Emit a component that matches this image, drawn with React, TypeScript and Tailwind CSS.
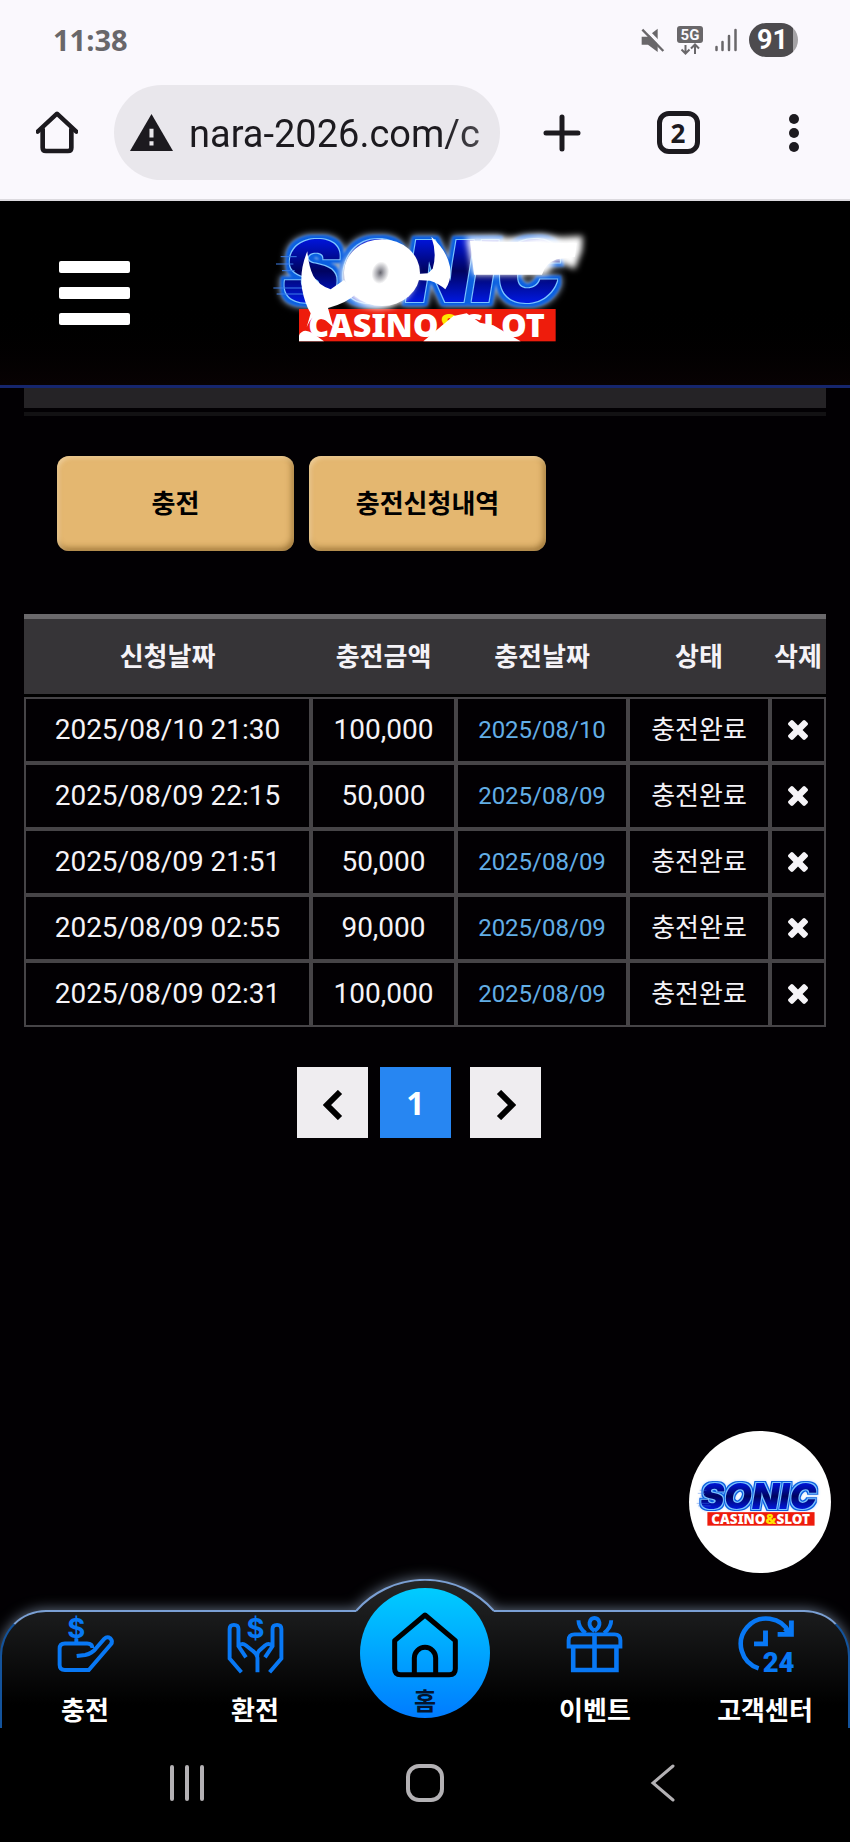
import { ReactNode } from 'react';

type Charge = {
  requestedAt: string;
  amount: string;
  chargedAt: string;
  status: string;
};

const charges: Charge[] = [
  { requestedAt: '2025/08/10 21:30', amount: '100,000', chargedAt: '2025/08/10', status: '충전완료' },
  { requestedAt: '2025/08/09 22:15', amount: '50,000', chargedAt: '2025/08/09', status: '충전완료' },
  { requestedAt: '2025/08/09 21:51', amount: '50,000', chargedAt: '2025/08/09', status: '충전완료' },
  { requestedAt: '2025/08/09 02:55', amount: '90,000', chargedAt: '2025/08/09', status: '충전완료' },
  { requestedAt: '2025/08/09 02:31', amount: '100,000', chargedAt: '2025/08/09', status: '충전완료' },
];

const columns = [
  { label: '신청날짜', width: 'w-[287px]' },
  { label: '충전금액', width: 'w-[145px]' },
  { label: '충전날짜', width: 'w-[172px]' },
  { label: '상태', width: 'w-[142px]' },
  { label: '삭제', width: 'w-[56px]' },
];

function StatusBar() {
  return (
    <div className="flex h-20 items-center justify-between pl-[53px] pr-[52px] text-[#69676a]">
      <span className="font-['Open_Sans',sans-serif] text-[29px] font-bold">11:38</span>
      <div className="flex items-center gap-3">
        <svg viewBox="0 0 75 75" className="h-[25px] w-[25px]">
          <path d="M5 26H22L53 2V72L24 50H5Z" fill="currentColor" />
          <path d="M14 0L78 66" stroke="#faf8fd" strokeWidth="10" />
          <path d="M7 5L70 69" stroke="currentColor" strokeWidth="7" />
        </svg>
        <svg viewBox="0 0 26 29" className="h-[29px] w-[26px]">
          <rect width="26" height="17" rx="3" fill="currentColor" />
          <text
            x="13"
            y="14"
            textAnchor="middle"
            fill="#faf8fd"
            className="font-['Roboto',sans-serif] text-[15px] font-bold"
          >
            5G
          </text>
          <path
            d="M8.500 19V27M4.500 23.500L8.500 27.500L12.500 23.500M18 28V19M14 22.500L18 18.500L22 22.500"
            fill="none"
            stroke="currentColor"
            strokeWidth="2"
          />
        </svg>
        <svg viewBox="0 0 22 24" className="h-6 w-[22px]">
          <path
            d="M1.500 19V22M7.500 14V22M14 8V22M20.500 2V22"
            stroke="currentColor"
            strokeWidth="2.500"
            strokeLinecap="round"
          />
        </svg>
        <span className="flex h-[34px] w-[49px] items-center justify-center rounded-full bg-linear-to-r from-[#4d4b4e] from-90% to-[#a5a3a6] to-90% pr-0.5 font-['Roboto',sans-serif] text-[27px] font-bold text-white">
          91
        </span>
      </div>
    </div>
  );
}

function BrowserBar() {
  return (
    <div className="flex h-[105px] items-center pl-9 pr-8 text-[#1c1a1f]">
      <button aria-label="홈페이지">
        <svg viewBox="0 0 126 129" className="h-[43px] w-[42px]" fill="none" stroke="currentColor">
          <path d="M5 62L63 8L121 62" strokeWidth="13" strokeLinecap="round" strokeLinejoin="round" />
          <path d="M20 52V110Q20 120 30 120H96Q106 120 106 110V52" strokeWidth="14" />
        </svg>
      </button>
      <div className="ml-9 flex h-[95px] min-w-0 flex-1 items-center rounded-full bg-[#e9e7ec] pl-4 pr-[14px]">
        <svg viewBox="0 0 128 110" className="h-[37px] w-[43px] shrink-0">
          <path d="M64 0L128 110H0Z" fill="currentColor" />
          <path d="M64 44V70M64 81V94" stroke="#e9e7ec" strokeWidth="12" />
        </svg>
        <input
          aria-label="주소"
          readOnly
          value="nara-2026.com/c"
          className="ml-4 min-w-0 flex-1 bg-transparent pt-1 font-['Roboto',sans-serif] text-[38px] outline-none [mask-image:linear-gradient(to_right,black_85%,#000b_100%)]"
        />
      </div>
      <div className="ml-[38px] flex gap-[68px]">
        <button aria-label="새 탭" className="flex h-12 w-12 items-center justify-center">
          <svg viewBox="0 0 38 38" className="h-[38px] w-[38px]">
            <path d="M19 3V35M3 19H35" stroke="currentColor" strokeWidth="5" strokeLinecap="round" />
          </svg>
        </button>
        <button aria-label="탭 2개" className="flex h-12 w-12 items-center justify-center">
          <span className="flex h-[43px] w-[43px] items-center justify-center rounded-xl border-[5px] border-current font-['Open_Sans',sans-serif] text-[26px] font-bold leading-none">
            2
          </span>
        </button>
        <button aria-label="메뉴" className="flex h-12 w-12 items-center justify-center">
          <svg viewBox="0 0 10 40" className="h-10 w-[10px]" fill="currentColor">
            <circle cx="5" cy="6" r="5" />
            <circle cx="5" cy="20" r="5" />
            <circle cx="5" cy="34" r="5" />
          </svg>
        </button>
      </div>
    </div>
  );
}

// `flash` lays the white shapes of the animated banner over the wordmark
function Logo({ id, flash = false, className }: { id: string; flash?: boolean; className: string }) {
  return (
    <svg viewBox="-15 0 1020 390" className={className} role="img" aria-label="SONIC CASINO&SLOT">
      <defs>
        <linearGradient id={`${id}-blue`} x1="0" y1="0" x2="0" y2="1">
          <stop offset="0.2" stopColor="#0014d8" />
          <stop offset="0.5" stopColor="#000360" />
          <stop offset="0.8" stopColor="#0018e0" />
        </linearGradient>
        <radialGradient id={`${id}-hole`}>
          <stop offset="0" stopColor="#66666e" />
          <stop offset="0.4" stopColor="#a8a8ae" />
          <stop offset="1" stopColor="#ffffff" />
        </radialGradient>
        {/* light edge, blue outline and outer glow around the letters */}
        <filter id={`${id}-outline`} x="-20%" y="-30%" width="140%" height="160%" colorInterpolationFilters="sRGB">
          <feMorphology in="SourceAlpha" operator="dilate" radius="4" result="thin" />
          <feFlood floodColor="#7cc4ff" />
          <feComposite in2="thin" operator="in" result="edge" />
          <feMorphology in="SourceAlpha" operator="dilate" radius="12" result="thick" />
          <feGaussianBlur in="thick" stdDeviation="3" result="thickSoft" />
          <feFlood floodColor="#0a5fe0" />
          <feComposite in2="thickSoft" operator="in" result="outline" />
          <feGaussianBlur in="thick" stdDeviation="11" result="wide" />
          <feFlood floodColor="#c4dcff" />
          <feComposite in2="wide" operator="in" result="glow" />
          <feMerge>
            <feMergeNode in="glow" />
            <feMergeNode in="outline" />
            <feMergeNode in="edge" />
            <feMergeNode in="SourceGraphic" />
          </feMerge>
        </filter>
        <filter id={`${id}-soft`} x="-20%" y="-30%" width="140%" height="160%">
          <feGaussianBlur stdDeviation="9" />
        </filter>
      </defs>
      <text
        x="68"
        y="246"
        fill={`url(#${id}-blue)`}
        filter={`url(#${id}-outline)`}
        className="font-['Inter',sans-serif] text-[256px] font-black italic"
      >
        SONIC
      </text>
      <path d="M62 110H110M48 132H100M66 152H104M40 204H130M50 222H140" stroke="#3c7fe8" strokeWidth="3" />
      <rect x="117" y="267" width="770" height="97" fill="#ee1c0c" />
      <text
        x="500"
        y="350"
        textAnchor="middle"
        fill="#ffffff"
        className="font-['Noto_Sans',sans-serif] text-[97px] font-black"
      >
        CASINO<tspan fill="#ffe600">&amp;</tspan>SLOT
      </text>
      {flash && (
        <g fill="#ffffff">
          <path
            d="M618 52L700 50L770 54L840 46L900 52L968 48L966 90L944 148L890 120L860 164H640Z"
            filter={`url(#${id}-soft)`}
          />
          <path d="M630 62L700 66L820 66L880 70L950 70L945 110L890 118Q856 130 846 164H642Z" />
          <ellipse cx="355" cy="168" rx="112" ry="98" filter={`url(#${id}-soft)`} />
          <ellipse cx="366" cy="158" rx="114" ry="100" />
          <ellipse cx="361" cy="158" rx="26" ry="34" fill={`url(#${id}-hole)`} transform="rotate(14 361 158)" />
          <path d="M142 94Q118 150 126 206Q134 250 152 280L140 322Q152 288 178 284L220 322L204 264Q260 250 290 220L252 180L212 208Q176 196 160 168Q146 140 142 94Z" />
          <path d="M514 50Q532 100 518 146L504 160L470 162V180L510 182Q536 190 556 208Q576 180 570 140Q560 90 514 50Z" />
          <path d="M117 364V346Q130 322 158 340L192 364Z" />
          <path d="M490 364L580 288L620 280L660 308L700 316L782 364Z" />
        </g>
      )}
    </svg>
  );
}

function SiteHeader() {
  return (
    <header className="grid h-[187px] grid-cols-[1fr_auto_1fr] items-center border-b-[3px] border-[#16266e] bg-linear-to-b from-black from-50% to-[#080203] pl-[59px] pr-[59px]">
      <button aria-label="전체메뉴" className="flex w-[71px] flex-col gap-[14px]">
        <span className="h-3 rounded-xs bg-white" />
        <span className="h-3 rounded-xs bg-white" />
        <span className="h-3 rounded-xs bg-white" />
      </button>
      <a href="#home" className="mb-4 block">
        <Logo id="top" flash className="h-[130px] w-[340px]" />
      </a>
    </header>
  );
}

function ChargeTable() {
  return (
    <table className="mt-[63px] w-full table-fixed border-separate border-spacing-0 text-center text-[26px] text-[#f5f3f7]">
      <thead>
        <tr>
          {columns.map((col) => (
            <th
              key={col.label}
              className={`${col.width} h-[83px] whitespace-nowrap border-b-[3px] border-t-[5px] border-b-black border-t-[#6b696c] bg-[#363437] p-0 pt-0.5 font-bold`}
            >
              {col.label}
            </th>
          ))}
        </tr>
      </thead>
      <tbody>
        {charges.map((row) => (
          <tr key={row.requestedAt} className="[&>td]:h-[66px] [&>td]:border-2 [&>td]:border-[#464447] [&>td]:p-0">
            <td className="text-[28px]">{row.requestedAt}</td>
            <td className="text-[28px]">{row.amount}</td>
            <td className="text-2xl text-[#62aee6]">{row.chargedAt}</td>
            <td>{row.status}</td>
            <td>
              <button aria-label={`${row.requestedAt} 삭제`} className="block w-full">
                <svg viewBox="110 366 1188 1188" className="mx-auto h-5 w-5" fill="currentColor">
                  <path d="M1298 1322q0 40-28 68l-136 136q-28 28-68 28t-68-28l-294-294-294 294q-28 28-68 28t-68-28l-136-136q-28-28-28-68t28-68l294-294-294-294q-28-28-28-68t28-68l136-136q28-28 68-28t68 28l294 294 294-294q28-28 68-28t68 28l136 136q28 28 28 68t-28 68l-294 294 294 294q28 28 28 68z" />
                </svg>
              </button>
            </td>
          </tr>
        ))}
      </tbody>
    </table>
  );
}

function Pagination() {
  return (
    <nav aria-label="페이지" className="mt-10 flex justify-center pr-3 text-black">
      <button aria-label="이전" className="flex h-[71px] w-[71px] items-center justify-center bg-[#efedf0]">
        <svg viewBox="0 0 20 30" className="mt-1 h-[30px] w-5" fill="none" stroke="currentColor" strokeWidth="6">
          <path d="M17 2L4 15L17 28" />
        </svg>
      </button>
      <button
        aria-current="page"
        className="ml-3 h-[71px] w-[71px] bg-[#2786f2] font-['Open_Sans',sans-serif] text-[32px] font-bold text-white"
      >
        1
      </button>
      <button aria-label="다음" className="ml-[19px] flex h-[71px] w-[71px] items-center justify-center bg-[#efedf0]">
        <svg viewBox="0 0 20 30" className="mt-1 h-[30px] w-5" fill="none" stroke="currentColor" strokeWidth="6">
          <path d="M3 2L16 15L3 28" />
        </svg>
      </button>
    </nav>
  );
}

function NavIcon({ children }: { children: ReactNode }) {
  return (
    <svg
      viewBox="0 0 174 174"
      className="h-[57px] w-[57px] overflow-visible text-[#0878f5]"
      fill="none"
      stroke="currentColor"
      strokeWidth="12"
    >
      {children}
    </svg>
  );
}

const dollar = "font-['Inter',sans-serif] text-[84px] font-bold";

const navItems = [
  {
    label: '충전',
    icon: (
      <NavIcon>
        <text x="59" y="67" textAnchor="middle" fill="currentColor" stroke="none" className={dollar}>
          $
        </text>
        <path d="M59 68V84" />
        <path d="M60 122L86 119Q108 114 118 100L144 70Q153 61 163 68Q172 77 164 87L97 165H24Q8 165 8 149V100Q8 84 24 84H92Q108 84 108 98" />
      </NavIcon>
    ),
  },
  {
    label: '환전',
    icon: (
      <NavIcon>
        <text x="87" y="67" textAnchor="middle" fill="currentColor" stroke="none" className={dollar}>
          $
        </text>
        <path d="M44 172L8 130V40Q8 27 21 27Q35 27 35 40V92L58 126M35 92Q46 80 58 90L78 106Q92 116 93 128V172" />
        <path d="M130 172L166 130V40Q166 27 153 27Q139 27 139 40V92L116 126M139 92Q128 80 116 90L98 106Q92 112 92 124" />
      </NavIcon>
    ),
  },
  { label: '홈', icon: null },
  {
    label: '이벤트',
    icon: (
      <NavIcon>
        <path d="M8 98V74Q8 56 26 56H148Q166 56 166 74V98M2 93H172" />
        <path d="M22 98V165H154V98M87 56V165" strokeWidth="14" />
        <path d="M87 46Q70 34 72 20Q75 6 87 6Q99 6 102 20Q104 34 87 46M38 13Q38 36 60 52M138 13Q138 36 116 52" />
      </NavIcon>
    ),
  },
  {
    label: '고객센터',
    icon: (
      <NavIcon>
        <path d="M66 160A78 78 0 1 1 160 52" strokeWidth="14" />
        <path d="M166 14V56H124M146 38L160 52M87 44V85H52" strokeWidth="15" />
        <text
          x="127"
          y="170"
          textAnchor="middle"
          fill="currentColor"
          stroke="none"
          className="font-['Roboto',sans-serif] text-[84px] font-black"
        >
          24
        </text>
      </NavIcon>
    ),
  },
];

function BottomNav() {
  return (
    <nav className="relative h-[149px]">
      {/* bar shape: two rounded sides with a raised middle */}
      <div className="absolute inset-0 flex items-end drop-shadow-[0_0_7px_rgba(170,195,225,0.6)]">
        <div className="h-[118px] flex-1 rounded-tl-[46px] border-l-2 border-t-2 border-l-[#13539c] border-t-[#7ba0d4] bg-linear-to-b/srgb from-[#1b1c1d] to-black to-80%" />
        <svg viewBox="0 0 138 149" className="h-[149px] w-[138px]">
          <defs>
            <linearGradient id="hump" x1="0" y1="0" x2="0" y2="1">
              <stop offset="0" stopColor="#252628" />
              <stop offset="0.22" stopColor="#1b1c1d" />
              <stop offset="0.84" stopColor="#000000" />
            </linearGradient>
          </defs>
          <path d="M0 32A92 92 0 0 1 138 32V149H0Z" fill="url(#hump)" />
          <path d="M0 32A92 92 0 0 1 138 32" fill="none" stroke="#7ba0d4" strokeWidth="2" />
        </svg>
        <div className="h-[118px] flex-1 rounded-tr-[46px] border-r-2 border-t-2 border-r-[#13539c] border-t-[#7ba0d4] bg-linear-to-b/srgb from-[#1b1c1d] to-black to-80%" />
      </div>
      <div className="relative grid h-full grid-cols-5 items-end justify-items-center">
        {navItems.map((item) =>
          item.icon ? (
            <a
              key={item.label}
              href={`#${item.label}`}
              className="flex flex-col items-center gap-[22px] pb-px text-[26px] font-bold leading-8 text-white"
            >
              {item.icon}
              {item.label}
            </a>
          ) : (
            <a
              key={item.label}
              href="#home"
              className="mb-[10px] flex h-[130px] w-[130px] flex-col items-center rounded-full bg-linear-to-b from-[#00ccff] to-[#007bff] pt-6 text-2xl font-bold leading-8 text-[#04142e]"
            >
              <svg
                viewBox="0 0 198 198"
                className="mb-2 h-[66px] w-[66px] shrink-0 text-black"
                fill="none"
                stroke="currentColor"
                strokeWidth="15"
                strokeLinejoin="round"
              >
                <path d="M8 86L99 9L190 86V170Q190 188 172 188H26Q8 188 8 170Z" />
                <path d="M67 188V138A32 32 0 0 1 131 138V188" />
              </svg>
              {item.label}
            </a>
          ),
        )}
      </div>
    </nav>
  );
}

function SystemBar() {
  return (
    <div className="relative flex h-[114px] items-center justify-between bg-black pb-1 pl-[163px] pr-[163px] text-[#b3b1b4]">
      <button aria-label="최근 앱">
        <svg viewBox="0 0 48 38" className="h-[38px] w-12" stroke="currentColor" strokeWidth="4" strokeLinecap="round">
          <path d="M9 3V35M24 3V35M39 3V35" />
        </svg>
      </button>
      <button aria-label="홈 화면" className="h-[38px] w-[38px] rounded-[13px] border-[4px] border-current" />
      <button aria-label="뒤로">
        <svg
          viewBox="0 0 48 38"
          className="h-[38px] w-12"
          fill="none"
          stroke="currentColor"
          strokeWidth="3"
          strokeLinecap="round"
        >
          <path d="M34 2L14 19L34 36" />
        </svg>
      </button>
    </div>
  );
}

export default function App() {
  return (
    <div className="flex min-h-screen flex-col bg-[#020003] font-['Roboto','Noto_Sans_CJK_KR',sans-serif]">
      <div className="h-[201px] border-b-2 border-[#dcdadf] bg-[#faf8fd]">
        <StatusBar />
        <BrowserBar />
      </div>
      <SiteHeader />
      <main className="relative flex-1 px-6">
        <div className="h-5 bg-[#252326]" />
        <div className="mt-1 h-1 bg-[#121113]" />
        <div className="mt-10 flex gap-[15px] pl-[33px]">
          <button className="h-[95px] w-[237px] rounded-xl bg-[#e4b770] pt-0.5 text-[26px] font-bold text-black shadow-[inset_2px_2px_4px_rgba(255,235,200,0.5),inset_-2px_-3px_6px_rgba(110,75,20,0.6)]">
            충전
          </button>
          <button className="h-[95px] w-[237px] rounded-xl bg-[#e4b770] pt-0.5 text-[26px] font-bold text-black shadow-[inset_2px_2px_4px_rgba(255,235,200,0.5),inset_-2px_-3px_6px_rgba(110,75,20,0.6)]">
            충전신청내역
          </button>
        </div>
        <ChargeTable />
        <Pagination />
        <a
          href="#top"
          className="absolute bottom-[6px] right-[19px] flex h-[142px] w-[142px] items-center justify-center rounded-full bg-white"
        >
          <Logo id="float" className="w-full" />
        </a>
      </main>
      <BottomNav />
      <SystemBar />
    </div>
  );
}
